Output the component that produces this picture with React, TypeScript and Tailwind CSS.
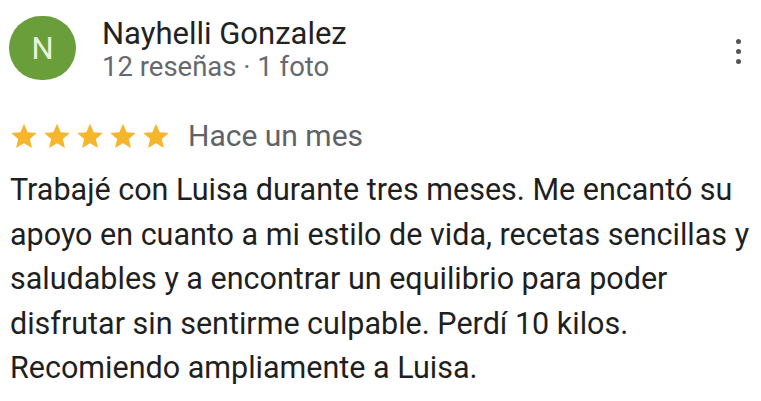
import React from 'react';

const Star = () => (
  <svg viewBox="0 0 24 24" className="w-[30px] h-[30px]" fill="#f6b62c">
    <path d="M12 2.2l2.95 6.75 7.25.62-5.5 4.8 1.65 7.13-6.35-3.8-6.35 3.8 1.65-7.13-5.5-4.8 7.25-.62z" />
  </svg>
);

const ReviewCard = () => {
  return (
    <div className="w-[761px] h-[401px] bg-white overflow-hidden px-[9px] font-['Roboto',sans-serif]">
      {/* header */}
      <div className="flex items-start pt-[16px]">
        <div className="w-[67px] h-[64px] rounded-full bg-[#699e3b] flex items-center justify-center shrink-0">
          <span className="text-[31px] text-[#e9f4dc] leading-none">N</span>
        </div>
        <div className="ml-[26px] flex flex-col mt-[1px]">
          <p className="text-[31px] leading-[34px] text-[#222]">Nayhelli Gonzalez</p>
          <p className="text-[27.5px] leading-[32px] text-[#666a6e]">12 reseñas · 1 foto</p>
        </div>
        <div className="ml-auto mr-[11px] mt-[23px] flex flex-col gap-[5px]">
          <span className="w-[5px] h-[5px] rounded-full bg-[#555]" />
          <span className="w-[5px] h-[5px] rounded-full bg-[#555]" />
          <span className="w-[5px] h-[5px] rounded-full bg-[#555]" />
        </div>
      </div>

      {/* rating */}
      <div className="flex items-center mt-[36px]">
        <div className="flex gap-[3px]">
          <Star />
          <Star />
          <Star />
          <Star />
          <Star />
        </div>
        <span className="ml-[17px] text-[30px] leading-[34px] text-[#5f6367]">Hace un mes</span>
      </div>

      {/* body */}
      <p className="mt-[15px] text-[30.5px] leading-[44.5px] text-[#1f1f1f] pl-[1px] whitespace-nowrap">
        Trabajé con Luisa durante tres meses. Me encantó su
        <br />
        apoyo en cuanto a mi estilo de vida, recetas sencillas y
        <br />
        saludables y a encontrar un equilibrio para poder
        <br />
        disfrutar sin sentirme culpable. Perdí 10 kilos.
        <br />
        Recomiendo ampliamente a Luisa.
      </p>
    </div>
  );
};

export default function App() {
  return <ReviewCard />;
}
